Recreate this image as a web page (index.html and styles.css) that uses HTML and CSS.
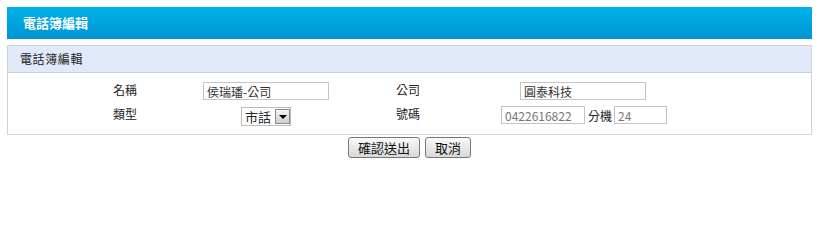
FILE: index.html
```html
<!DOCTYPE html>
<html lang="zh-Hant">
<head>
    <meta charset="UTF-8">
    <title>電話簿編輯</title>
    <link rel="stylesheet" href="styles.css">
</head>
<body>

    <!-- Page title bar -->
    <div class="title-bar">電話簿編輯</div>

    <!-- Edit panel -->
    <div class="panel">
        <div class="panel-head">電話簿編輯</div>
        <div class="form-grid">
            <div class="label label-first">名稱</div>
            <div class="field"><input class="txt txt-name" type="text" value="侯瑞璠-公司"></div>
            <div class="label">公司</div>
            <div class="field"><input class="txt txt-name" type="text" value="圓泰科技"></div>

            <div class="label label-first">類型</div>
            <div class="field">
                <div class="fake-select">
                    <span class="sel-text">市話</span>
                    <span class="sel-arrow"></span>
                </div>
            </div>
            <div class="label">號碼</div>
            <div class="field phone">
                <input class="txt txt-phone muted" type="text" value="0422616822">
                <span class="ext-label">分機</span>
                <input class="txt txt-ext muted" type="text" value="24">
            </div>
        </div>
    </div>

    <!-- Actions -->
    <div class="actions">
        <button class="btn">確認送出</button>
        <button class="btn">取消</button>
    </div>

</body>
</html>
```

FILE: styles.css
```css
/* General Reset */
html, body {
    margin: 0;
    padding: 0;
}

body {
    padding: 7px 8px 0 7px;
    font-family: "Noto Sans CJK TC", "Liberation Sans", sans-serif;
    font-size: 12px;
    color: #222;
    background: #fff;
}

/* Blue title bar */
.title-bar {
    height: 32px;
    line-height: 31px;
    padding-left: 16px;
    background: linear-gradient(#00b2ea, #0094d0);
    color: #fff;
    font-size: 13px;
    font-weight: bold;
}

/* Panel */
.panel {
    margin-top: 6px;
    border: 1px solid #d2d2d2;
}

.panel-head {
    height: 26px;
    line-height: 25px;
    padding-left: 12px;
    background: #e1eafa;
    border-bottom: 1px solid #cdd2da;
    letter-spacing: 0.6px;
}

.form-grid {
    display: grid;
    grid-template-columns: 195px 126px 172px 164px;
    grid-auto-rows: 24px;
    padding: 6px 0 7px;
}

.label {
    line-height: 22px;
    padding-left: 67px;
}

.label-first {
    padding-left: 105px;
}

.field {
    display: flex;
    align-items: center;
    justify-content: center;
}

/* Text inputs */
.txt {
    box-sizing: border-box;
    height: 18px;
    margin: 0;
    padding: 0 3px;
    border: 1px solid #c4c4c4;
    font-family: inherit;
    font-size: 12px;
    color: #333;
    background: #fff;
}

.txt-name {
    width: 126px;
}

.txt-phone {
    width: 84px;
}

.txt-ext {
    width: 53px;
}

.muted {
    color: #777;
}

.phone {
    justify-content: flex-start;
}

.ext-label {
    margin: 0 2px 0 3px;
    white-space: nowrap;
    flex-shrink: 0;
}

/* Select look */
.fake-select {
    box-sizing: border-box;
    display: flex;
    align-items: center;
    width: 50px;
    height: 19px;
    margin-top: 3px;
    border: 1px solid #bcbcbc;
    background: #fff;
}

.sel-text {
    font-size: 13px;
    padding-left: 3px;
    width: 31px;
}

.sel-arrow {
    box-sizing: border-box;
    width: 15px;
    height: 15px;
    border: 1px solid #8a8a8a;
    background: linear-gradient(#f4f4f4, #cfcfcf);
    position: relative;
}

.sel-arrow::after {
    content: "";
    position: absolute;
    left: 3px;
    top: 5px;
    border-left: 4px solid transparent;
    border-right: 4px solid transparent;
    border-top: 4px solid #000;
}

/* Buttons */
.actions {
    display: flex;
    justify-content: center;
    gap: 5px;
    margin-top: 2px;
}

.btn {
    height: 21px;
    padding: 0 9px;
    border: 1px solid #777;
    border-radius: 3px;
    background: linear-gradient(#fafafa, #d8d8d8);
    font-family: inherit;
    font-size: 13px;
    line-height: 18px;
    color: #111;
    cursor: pointer;
}

.btn:hover {
    background: linear-gradient(#ffffff, #e4e4e4);
}
```
